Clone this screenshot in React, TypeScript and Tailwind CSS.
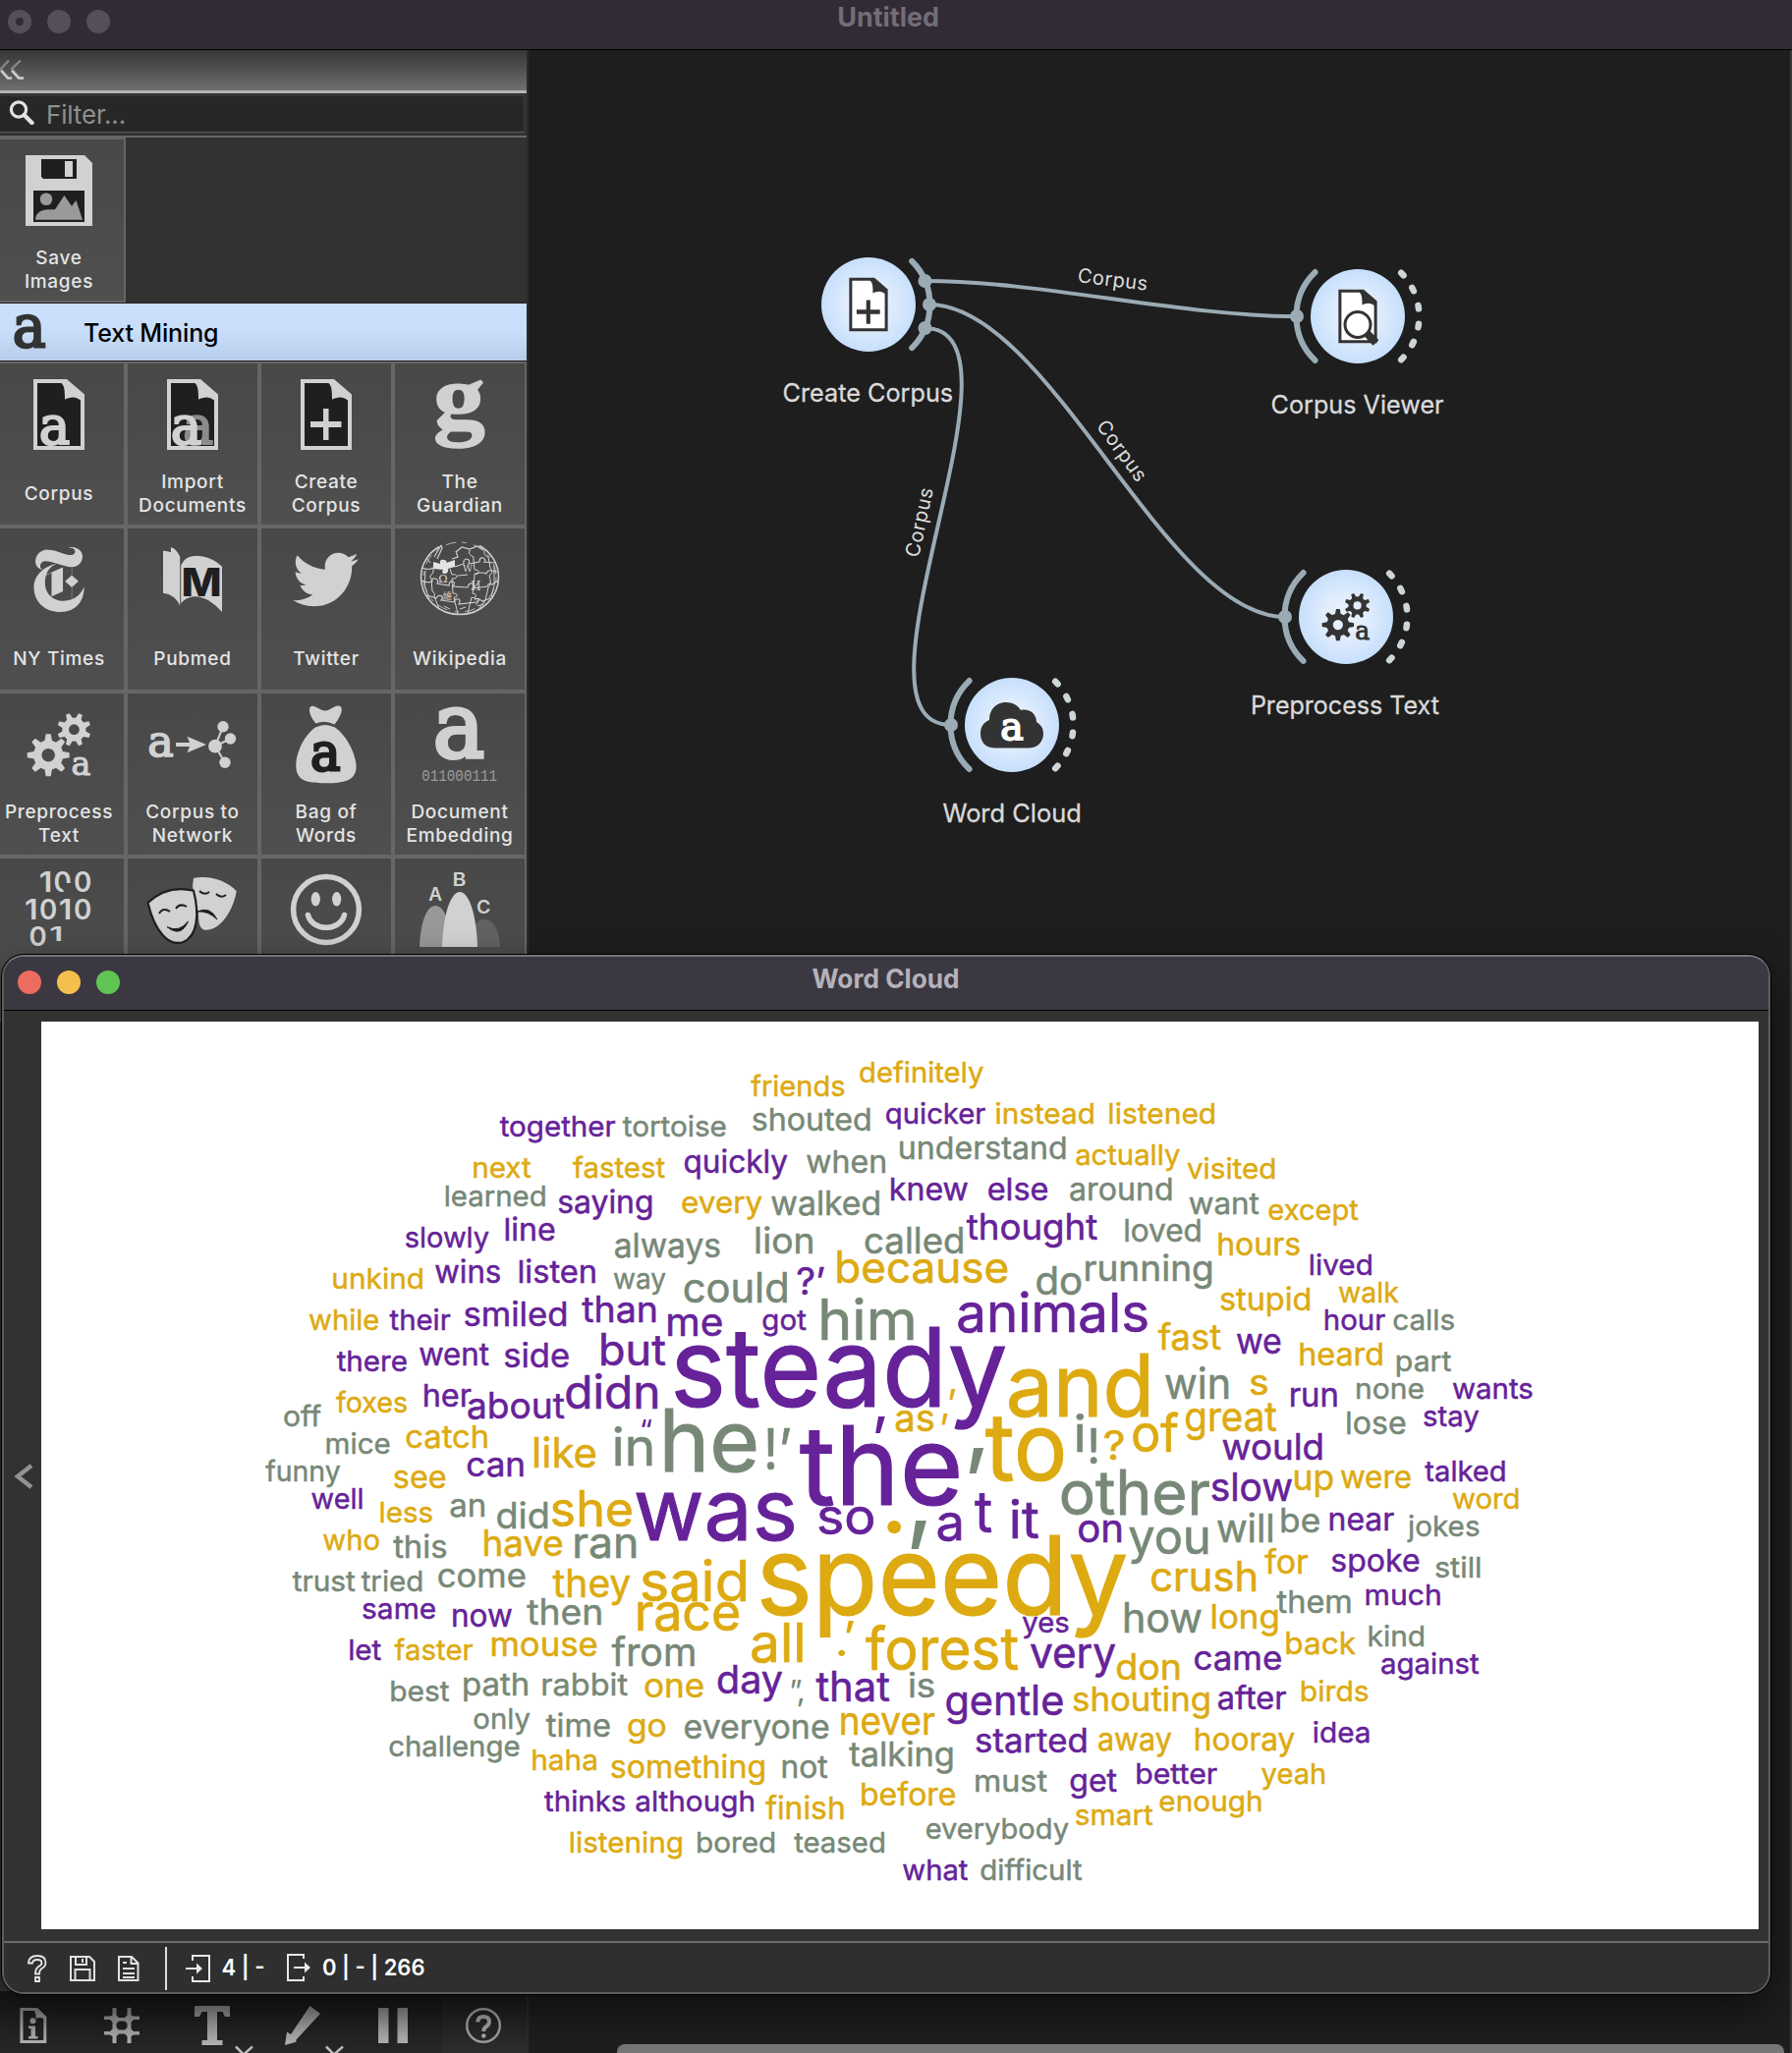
import React from "react";
import { FaTwitter } from "react-icons/fa";
import { SiNewyorktimes } from "react-icons/si";

/* ---------- fitted text ---------- */

const LIGHT = "#d1d1d1";
const DARK = "#1f1f1f";
const INK = "#333333";
const LINK = "#9aabb5";

let ctx: CanvasRenderingContext2D | null = null;
function ink(text: string, family: string, weight: number) {
  if (!ctx) ctx = document.createElement("canvas").getContext("2d");
  const c = ctx!;
  c.font = `${weight} 200px ${family}`;
  const m = c.measureText(text);
  return {
    left: m.actualBoundingBoxLeft / 200,
    width: (m.actualBoundingBoxLeft + m.actualBoundingBoxRight) / 200,
    up: m.actualBoundingBoxAscent / 200,
    down: m.actualBoundingBoxDescent / 200,
  };
}

type FitProps = {
  text: string;
  l: number;
  r: number;
  base?: number;
  size?: number;
  top?: number;
  bottom?: number;
  family?: string;
  weight?: number;
  fill?: string;
  stroke?: number;
};

/* SVG text whose ink spans l..r, set either on a baseline or inside a top/bottom box. */
function Fit({ text, l, r, base, size, top, bottom, family = "Inter, sans-serif", weight = 400, fill = LIGHT, stroke = 0 }: FitProps) {
  const m = ink(text, family, weight);
  let s = size ?? 16;
  let y = base ?? 0;
  if (top !== undefined && bottom !== undefined) {
    s = (bottom - top) / (m.up + m.down);
    y = bottom - m.down * s;
  }
  const k = (r - l) / (m.width * s);
  return (
    <text
      transform={`translate(${l} ${y}) scale(${k} 1)`}
      x={m.left * s}
      y={0}
      fontFamily={family}
      fontWeight={weight}
      fontSize={s}
      fill={fill}
      stroke={stroke ? fill : "none"}
      strokeWidth={stroke}
      className="whitespace-pre"
    >
      {text}
    </text>
  );
}

const SERIF = '"DejaVu Serif", serif';

function SlabA(p: { l: number; r: number; top: number; bottom: number; fill?: string; w?: number }) {
  const w = p.w ?? 2.2;
  return (
    <Fit text="a" l={p.l + w / 2} r={p.r - w / 2} top={p.top + w / 2} bottom={p.bottom - w / 2} family={SERIF} fill={p.fill} stroke={w} />
  );
}

/* ---------- shared drawings (136 x 110 tile space) ---------- */

function Doc({ frame = LIGHT, page = DARK }: { frame?: string; page?: string }) {
  return (
    <>
      <path d="M42 18H76L94 33.5V90H42Z" fill={frame} />
      <path d="M46 22H70.5C73.500 25 74 29 74 38.700C79 36 85 35 90 39.500V86H46Z" fill={page} />
    </>
  );
}

function Plus({ fill = LIGHT }: { fill?: string }) {
  return <path d="M65 48H70.500V61H83.500V67H70.500V80H65V67H52V61H65Z" fill={fill} />;
}

function gearPath(cx: number, cy: number, R: number, hole: number, phase: number) {
  const n = 8;
  const inner = R * 0.7;
  const step = (Math.PI * 2) / n;
  const p = (r: number, a: number) => `${(cx + r * Math.cos(a)).toFixed(2)} ${(cy + r * Math.sin(a)).toFixed(2)}`;
  let d = "";
  for (let i = 0; i < n; i++) {
    const a = i * step + phase;
    d += `${i ? "L" : "M"}${p(inner, a - step * 0.32)}L${p(R, a - step * 0.15)}L${p(R, a + step * 0.15)}L${p(inner, a + step * 0.32)}`;
    d += `A${inner} ${inner} 0 0 1 ${p(inner, a + step * 0.68)}`;
  }
  return `${d}ZM${cx + hole} ${cy}A${hole} ${hole} 0 1 0 ${cx - hole} ${cy}A${hole} ${hole} 0 1 0 ${cx + hole} ${cy}Z`;
}

function Gears({ fill = LIGHT }: { fill?: string }) {
  return (
    <>
      <path d={gearPath(57.2, 64.7, 21.6, 6.8, 0)} fill={fill} fillRule="evenodd" />
      <path d={gearPath(83.4, 38.7, 17.2, 5.4, Math.PI / 8)} fill={fill} fillRule="evenodd" />
      <SlabA l={81.300} r={100} top={66} bottom={86} fill={fill} w={1.2} />
    </>
  );
}

/* ---------- tile icons ---------- */

const icons: Record<string, React.ReactNode> = {
  save: (
    <>
      <path d="M34 18H94L102 26V90H34Z" fill={LIGHT} />
      <path d="M50 22H86V42H52L50 40Z" fill={DARK} />
      <path d="M74 24H82V40H74Z" fill={LIGHT} />
      <path d="M42 54H94V86H42Z" fill={DARK} />
      <circle cx="55" cy="62.700" r="6.300" fill="#9a9a9a" />
      <path d="M44 83.700C44 77 50 73.500 57 73.300H64L73.400 59L81 69.700L85.500 64L92 83.700Z" fill="#9a9a9a" />
    </>
  ),
  corpus: (
    <>
      <Doc />
      <SlabA l={49} r={79} top={54} bottom={86} />
    </>
  ),
  import: (
    <>
      <Doc />
      <SlabA l={59.5} r={89} top={54} bottom={86} fill="#8c8c8c" />
      <SlabA l={47} r={77} top={54} bottom={86} />
    </>
  ),
  create: (
    <>
      <Doc />
      <Plus />
    </>
  ),
  guardian: <Fit text="g" l={43.5} r={93} top={19.700} bottom={88} family={'"Liberation Serif", serif'} weight={700} stroke={1.6} />,
  nyt: (
    <g transform="translate(35 21)">
      <SiNewyorktimes size={66} color={LIGHT} />
    </g>
  ),
  pubmed: (
    <>
      <path d="M38 24.700Q42 24.500 45.900 26.300V21Q52 23 55.200 30.700V80.700Q50 69 38 67.700Z" fill={LIGHT} />
      <path d="M56.200 39.700C60 31 66 29.500 75 30C84 31 92 35 98 40.700V87C85 72 68 65 56.200 78Z" fill={LIGHT} />
      <Fit text="M" l={59} r={95.500} top={41.300} bottom={70.700} weight={800} fill={DARK} />
    </>
  ),
  twitter: (
    <g transform="translate(34 20.500)">
      <FaTwitter size={67} color={LIGHT} />
    </g>
  ),
  wikipedia: (
    <>
      <path d="M47 20.500C36 27 28.500 38 28.500 51.500A39.500 38 0 0 0 107.500 51.500C107.500 38 99.500 25.500 88 19.500" fill="none" stroke={LIGHT} strokeWidth="1.5" />
      <path d="M49 19L42 31M49 19L50 22L45 33M64 26L70 21L78 23L86 20L92 24M60 33L66 31L64 25" fill="none" stroke={LIGHT} strokeWidth="1.2" />
      <path d="M41 36L48 38Q47 33 52 34Q56 35 54 37L63 34V41L56 43Q57 48 52 48Q49 47 51 44L41 43Z" fill="#e4e4e4" />
      <path
        d="M30 42Q36 45 41 42M29 55Q35 58 40 56Q39 52 43 53Q47 54 45 58L57 60Q57 55 61 56Q64 58 61 61L76 62Q77 57 81 58Q84 60 81 63L96 61Q97 57 101 59L107 55M33 70Q40 71 44 73Q46 69 50 71Q51 74 49 75L62 77Q63 73 67 74Q69 76 67 79L85 77Q88 73 91 76L99 73M63 41L72 38Q71 34 75 33Q79 34 77 38L88 36Q88 31 92 32Q95 34 93 36L104 37M66 50L76 49M84 48Q90 46 95 48Q96 44 100 45L106 46"
        fill="none"
        stroke={LIGHT}
        strokeWidth="1.1"
      />
      <path
        d="M41 43Q42 48 39 49Q36 51 39 53L40 66Q44 68 42 71L47 84M58 43L60 49Q65 48 65 51Q64 54 60 53L61 68Q66 68 65 71Q63 73 62 72L66 89M78 24Q76 28 80 30Q83 30 82 34L83 44Q88 44 87 47Q86 50 83 48L82 62L81 68Q86 69 84 72Q82 73 80 72L76 89M93 24Q92 30 97 31L99 42Q103 47 98 50Q101 58 97 62L94 75L86 86M35 33L38 37M33 45L32 60L37 73M103 40V60L100 72M52 81L58 84M68 84L74 82M86 81L92 79"
        fill="none"
        stroke={LIGHT}
        strokeWidth="1"
      />
      <Fit text="Ω" l={47} r={55} top={49} bottom={57} family={SERIF} />
      <Fit text="W" l={71} r={81} top={39} bottom={46} family={SERIF} />
      <Fit text="И" l={80} r={89} top={56} bottom={65} family={SERIF} />
      <Fit text="維" l={51} r={60} top={67} bottom={75} family={'"Noto Sans CJK TC", sans-serif'} />
      <Fit text="7" l={83} r={88} top={73} bottom={80} family={SERIF} weight={700} />
      <ellipse cx="68" cy="51.500" rx="37" ry="35.500" fill="none" stroke={LIGHT} strokeWidth="0.8" strokeDasharray="3 5 7 4" pathLength={150} />
    </>
  ),
  preprocess: <Gears />,
  network: (
    <>
      <SlabA l={23.500} r={48.500} top={41} bottom={67} w={1.6} />
      <path d="M51 52H65L62.500 45.700L82 54L62.500 62.300L65 56H51Z" fill={LIGHT} />
      <path d="M91 55.700L99 35.700M91 55.700L106.500 48M91 55.700L101 72.300" stroke={LIGHT} strokeWidth="2" />
      <circle cx="91" cy="55.700" r="6.900" fill={LIGHT} />
      <circle cx="99" cy="35.700" r="5.700" fill={LIGHT} />
      <circle cx="106.500" cy="48" r="5.700" fill={LIGHT} />
      <circle cx="101" cy="72.300" r="5.700" fill={LIGHT} />
    </>
  ),
  bag: (
    <>
      <path d="M51.500 16C55 12 61 19.500 67 19.500C73 19.500 78 12 83 15.500C86 20 80 29 76.500 33.500Q67 28.500 57.500 32.500C52 26 50 20 51.500 16Z" fill={LIGHT} />
      <path d="M57 36.500Q67 31.500 77 36.500C90 46 98 64 98.600 76C98.600 90 88 93.300 68 93.300C46 93.300 37 90 37.300 74C37.500 62 46 44 57 36.500Z" fill={LIGHT} />
      <SlabA l={52.800} r={82.500} top={50} bottom={82} fill={DARK} w={2.8} />
    </>
  ),
  embedding: (
    <>
      <SlabA l={42.800} r={93} top={16.700} bottom={70.700} w={4} />
      <Fit text="011000111" l={30} r={105.500} top={80} bottom={91} family={'"Liberation Mono", monospace'} fill="#9c9c9c" />
    </>
  ),
  binary: (
    <>
      {(
        [
          ["1", 49.3, 59.3, 15.3, 36.3],
          ["0", 64, 79.6, 15.3, 36.3],
          ["0", 84.4, 100, 15.3, 36.3],
          ["1", 34.5, 44.5, 43, 64],
          ["0", 49.3, 64.8, 43, 64],
          ["1", 69.3, 79.3, 43, 64],
          ["0", 84.4, 100, 43, 64],
          ["0", 39, 54.5, 71, 91.5],
          ["1", 59.7, 70, 71, 86],
        ] as [string, number, number, number, number][]
      ).map(([t, l, r, top, bottom], i) => (
        <Fit key={i} text={t} l={l} r={r} top={top} bottom={bottom} weight={600} />
      ))}
      <path d="M73 27H81V32L74.500 38L71.500 33Z" fill="#494949" />
    </>
  ),
  masks: (
    <>
      <path d="M68 30L69 22C85.500 18.700 103 24.700 112.700 35.300C109.600 54.700 96 76.300 80.300 74.700C75 73 74 68 74 58Z" fill={LIGHT} />
      <path d="M75 35Q80 40 85 36M92 38Q97 43 102 39" fill="none" stroke={DARK} strokeWidth="2" />
      <path d="M73 56Q86 50 93 64Q84 55 73 56Z" fill={DARK} stroke={DARK} />
      <path d="M22.500 47C34 36.300 48 29.700 69 34.700C75 58 73.500 81 58 87.300C44 91 30 78 22.500 47Z" fill={LIGHT} stroke={DARK} strokeWidth="2.200" />
      <path d="M34 58Q38 51 45 56M51 53Q55 47 62 51" fill="none" stroke={DARK} strokeWidth="2" />
      <path d="M42 71.500Q54 78 63.500 66Q56 83 42 71.500Z" fill={DARK} stroke={DARK} />
    </>
  ),
  smile: (
    <>
      <ellipse cx="68" cy="54" rx="33.400" ry="33.400" fill="none" stroke={LIGHT} strokeWidth="5.500" />
      <ellipse cx="57.300" cy="43.300" rx="4.600" ry="7.300" fill={LIGHT} />
      <ellipse cx="78.700" cy="43.300" rx="4.600" ry="7.300" fill={LIGHT} />
      <path d="M49.500 59.500C54 76.500 82 76.500 86.500 59.500" fill="none" stroke={LIGHT} strokeWidth="5.500" strokeLinecap="round" />
    </>
  ),
  topics: (
    <>
      <path d="M27 92C28 65 35 50 43 50C52 50 58 65 59 92Z" fill="#989898" />
      <path d="M77 92C78 74 85 64 93 64C102 64 108 74 109 92Z" fill="#626262" />
      <path d="M50 92C51 58 59 36 68 36C77 36 85 58 86 92Z" fill={LIGHT} />
      <Fit text="A" l={36.700} r={49.700} top={31.700} bottom={45} weight={600} />
      <Fit text="B" l={62} r={73.500} top={16.700} bottom={30} weight={600} />
      <Fit text="C" l={86} r={98.600} top={44.700} bottom={58.300} weight={600} />
    </>
  ),
};

function Tile({ icon, label }: { icon: string; label: string[] }) {
  return (
    <div className="flex h-[168px] w-[136px] shrink-0 flex-col border-2 border-[#666666] bg-linear-to-b from-[#484848] to-[#4f4f4f]">
      <svg viewBox="2 2 132 106" className="h-[106px] w-[132px] shrink-0">
        {icons[icon]}
      </svg>
      <div className="flex h-[54px] flex-col items-center justify-center text-[19px] leading-[24px] font-medium tracking-[0.7px] whitespace-nowrap text-[#e4e4e4]">
        {label.map((t) => (
          <span key={t}>{t}</span>
        ))}
      </div>
    </div>
  );
}

const tiles: { icon: string; label: string[] }[] = [
  { icon: "corpus", label: ["Corpus"] },
  { icon: "import", label: ["Import", "Documents"] },
  { icon: "create", label: ["Create", "Corpus"] },
  { icon: "guardian", label: ["The", "Guardian"] },
  { icon: "nyt", label: ["NY Times"] },
  { icon: "pubmed", label: ["Pubmed"] },
  { icon: "twitter", label: ["Twitter"] },
  { icon: "wikipedia", label: ["Wikipedia"] },
  { icon: "preprocess", label: ["Preprocess", "Text"] },
  { icon: "network", label: ["Corpus to", "Network"] },
  { icon: "bag", label: ["Bag of", "Words"] },
  { icon: "embedding", label: ["Document", "Embedding"] },
  { icon: "binary", label: [] },
  { icon: "masks", label: [] },
  { icon: "smile", label: [] },
  { icon: "topics", label: [] },
];

/* ---------- sidebar ---------- */

function Sidebar() {
  return (
    <aside className="flex w-[538px] shrink-0 flex-col border-r-2 border-[#2b2b2b] bg-[#323232]">
      <div className="h-[44px] shrink-0 border-b-[3px] border-[#b4b4b4] bg-linear-to-b from-[#363636] to-[#707070]">
        <svg width="26" height="40" viewBox="0 0 26 40" fill="none" strokeWidth="2.400">
          <path d="M9 10.500L1 19L8 28M21 10.500L12 19L20 28" stroke="#858585" />
          <path d="M1 21L8 28.500H12M12 21L19 28.500H24" stroke="#cfcfcf" />
        </svg>
      </div>
      <div className="mt-[2px] flex h-[38px] w-[534px] shrink-0 items-center border-t border-r border-b border-[#3b3b3b] border-b-[#5c5c5c] bg-[#272727] pl-[9px]">
        <svg width="26" height="26" viewBox="0 0 26 26" className="-mt-1 shrink-0" fill="none" stroke="#e2e2e2">
          <circle cx="10" cy="10.500" r="7.600" strokeWidth="3.200" />
          <path d="M15.500 16L23.500 24" strokeWidth="4.400" strokeLinecap="round" />
        </svg>
        <span className="mt-[2px] ml-[12px] text-[26px] leading-none tracking-[-0.15px] text-[#8f8f8f]">Filter...</span>
      </div>
      <div className="mt-[3px] shrink-0 border-t-2 border-[#666666]">
        <div className="-ml-2">
          <Tile icon="save" label={["Save", "Images"]} />
        </div>
      </div>
      <div className="flex h-[60px] shrink-0 items-center border-y border-[#202020] bg-linear-to-b from-[#cae0fd] via-[#c8defa] to-[#b6cce8]">
        <svg width="60" height="58" viewBox="0 309 60 58" className="shrink-0">
          <SlabA l={14} r={46.500} top={320} bottom={355.500} fill="#333333" w={2.6} />
        </svg>
        <span className="mt-[3px] ml-[25px] text-[25px] font-medium tracking-[-0.15px] text-black">Text Mining</span>
      </div>
      <div className="min-h-0 flex-1 overflow-hidden">
        <div className="-ml-2 grid w-[544px] grid-cols-4">
          {tiles.map((t) => (
            <Tile key={t.icon} {...t} />
          ))}
        </div>
      </div>
      <Toolbar />
    </aside>
  );
}

function Toolbar() {
  return (
    <div className="flex h-[64px] shrink-0 border-t border-[#3c3c3c] bg-linear-to-b from-[#171717] to-[#282828]">
      <svg width="536" height="63" viewBox="0 2027 536 63">
        <defs>
          <linearGradient id="tool" gradientUnits="userSpaceOnUse" x1="0" y1="2042" x2="0" y2="2082">
            <stop offset="0" stopColor="#858585" />
            <stop offset="1" stopColor="#b4b4b4" />
          </linearGradient>
        </defs>
        <path d="M450 2027H536V2090H450Z" fill="#ffffff" fillOpacity="0.025" />
        <g fill="url(#tool)">
          <path fillRule="evenodd" d="M20.400 2044H38L47.300 2053V2080H20.400ZM23.500 2047V2077H44.300V2055Q40 2053 36.500 2055Q37 2050 35 2047Z" />
          <circle cx="33.500" cy="2057.300" r="3" />
          <path d="M29 2062.500H36V2073H38.500V2075.500H29V2073H31.500V2065H29Z" />
          <path d="M114.500 2044H118.500V2051.500L121 2054H127L129.500 2051.500V2044H133.500V2051.500L136 2052.500H142V2056H136L133.500 2058.500V2065.500L136 2068H142V2071.500H136L133.500 2073V2080H129.500V2073L127 2070.500H121L118.500 2073V2080H114.500V2073L112 2071.500H106V2068H112L114.500 2065.500V2058.500L112 2056H106V2052.500H112L114.500 2051.500ZM121 2057.500L118.500 2060V2064L121 2066.500H127L129.500 2064V2060L127 2057.500Z" fillRule="evenodd" />
          <path d="M198 2042H234V2053H229L226.500 2048H221V2077H226.500V2082H205.500V2077H211V2048H205.500L203 2053H198Z" />
          <path d="M315.500 2042L326 2050L301 2077L302 2078.500L290 2082L292 2068.500L296 2071Z" />
          <path d="M385 2044H395.500V2080H385ZM404.500 2044H415V2080H404.500Z" />
        </g>
        <g fill="none" stroke="#bdbdbd" strokeWidth="2.500">
          <path d="M240 2083.500L248 2091.500L257 2083.500M332 2083.500L340 2091.500L349 2083.500" />
          <circle cx="492" cy="2062" r="16.800" stroke="#9e9e9e" />
          <path d="M486.300 2058.500Q486.500 2053 492 2053Q498 2053 498 2058Q498 2061 495 2063Q492.300 2064.500 492.300 2068" stroke="#a2a2a2" strokeWidth="4" />
        </g>
        <circle cx="492.300" cy="2072.500" r="2.300" fill="#aaaaaa" />
      </svg>
    </div>
  );
}

/* ---------- workflow canvas ---------- */

function polar(r: number, deg: number) {
  const a = (deg * Math.PI) / 180;
  return `${(r * Math.cos(a)).toFixed(2)} ${(r * Math.sin(a)).toFixed(2)}`;
}
const ARC_R = 62.5;
const rightArc = `M${polar(ARC_R, -45)}A${ARC_R} ${ARC_R} 0 0 1 ${polar(ARC_R, 45)}`;
const leftArc = `M${polar(ARC_R, 226)}A${ARC_R} ${ARC_R} 0 0 0 ${polar(ARC_R, 134)}`;

function Node({ x, y, children, source }: { x: number; y: number; children: React.ReactNode; source?: boolean }) {
  return (
    <g transform={`translate(${x} ${y})`}>
      {source ? (
        <g fill={LINK}>
          <path d={rightArc} fill="none" stroke={LINK} strokeWidth="6" strokeLinecap="round" />
          <circle cx="57.500" cy="-24" r="7" />
          <circle cx="62" cy="0" r="7" />
          <circle cx="57.500" cy="24" r="7" />
        </g>
      ) : (
        <g>
          <path d={leftArc} fill="none" stroke={LINK} strokeWidth="6" strokeLinecap="round" />
          <circle cx="-62" cy="0" r="7" fill={LINK} />
          <path d={rightArc} fill="none" stroke="#cdd5d8" strokeWidth="6.500" strokeLinecap="round" strokeDasharray="3.600 15.300" />
        </g>
      )}
      <circle r="48" fill="url(#node)" />
      {children}
    </g>
  );
}

const tileSpace = "scale(0.755) translate(-68 -54)";

function Canvas() {
  return (
    <svg width="1284" height="2039" viewBox="538 51 1284 2039" className="shrink-0 bg-[#1e1e1e]">
      <defs>
        <radialGradient id="node">
          <stop offset="0" stopColor="#ecf4fe" />
          <stop offset="0.500" stopColor="#dfecfd" />
          <stop offset="1" stopColor="#c7dffc" />
        </radialGradient>
      </defs>
      <g fill="none" stroke={LINK} strokeWidth="4">
        <path d="M941 286C1060 286 1201 322 1320 322" />
        <path d="M946 310C1068 310 1186 628 1308 628" />
        <path d="M941 334C1060 334 849 738 968 738" />
      </g>
      <Node x={884} y={310} source>
        <g transform={tileSpace}>
          <Doc frame={INK} page="#ffffff" />
          <Plus fill={INK} />
        </g>
      </Node>
      <Node x={1382} y={322}>
        <g transform={tileSpace}>
          <Doc frame={INK} page="#ffffff" />
        </g>
        <path d="M9 17L18.500 27" stroke={INK} strokeWidth="8" />
        <circle cx="0" cy="8.400" r="13" fill="#ffffff" stroke={INK} strokeWidth="3" />
      </Node>
      <Node x={1370} y={628}>
        <g transform={tileSpace}>
          <Gears fill={INK} />
        </g>
      </Node>
      <Node x={1030} y={738}>
        <path d="M-18 23.400C-27 23.400 -32 17 -32 9C-32 1 -28 -3 -23 -5C-23 -17 -15 -23 -6 -23C1 -23 6 -20 9 -15C18 -17 25 -11 25 -3C30 0 32 4 32 9C32 17 26 23.400 18 23.400Z" fill={INK} />
        <SlabA l={-11} r={11.500} top={-7.500} bottom={16} fill="#ffffff" w={1.8} />
      </Node>
      <Fit text="Create Corpus" l={798} r={969} base={408.700} size={25.500} fill="#dadada" stroke={0.3} />
      <Fit text="Corpus Viewer" l={1295} r={1469} base={420.700} size={25.500} fill="#dadada" stroke={0.3} />
      <Fit text="Preprocess Text" l={1275} r={1464.500} base={726.700} size={25.500} fill="#dadada" stroke={0.3} />
      <Fit text="Word Cloud" l={960} r={1099} base={836.900} size={25.500} fill="#dadada" stroke={0.3} />
      <g fill="#dedede" fontFamily="Inter, sans-serif" fontSize="20" fontWeight="400" letterSpacing="0.500" textAnchor="middle">
        <text transform="translate(1132 291.500) rotate(7)">Corpus</text>
        <text transform="translate(1136.500 463) rotate(54)">Corpus</text>
        <text transform="translate(942.500 533) rotate(-78)">Corpus</text>
      </g>
    </svg>
  );
}

/* ---------- word cloud ---------- */

const P = "#662299";
const Y = "#ddaa11";
const G = "#778877";

/* Each sector of the cloud stores its words on its own grid: [text, left, right, baseline, size, colour]. */
type Word = [string, number, number, number, number, string];
type Sector = { ox: number; oy: number; ux: number; uy: number; words: Word[] };

const UX = 780 / 1568;

const sectors: Sector[] = [
  {
    ox: 260, oy: 1060, ux: 1 / 2.8, uy: 1 / 3,
    words: [
      ["together", 696, 1024, 292, 29, P], ["tortoise", 1046, 1339, 292, 29, G], ["next", 622, 784, 418, 29, Y],
      ["fastest", 904, 1166, 418, 29, Y], ["quickly", 1223, 1515, 401, 32, P], ["learned", 542, 824, 503, 29, G],
      ["saying", 864, 1128, 526, 31.5, P], ["every", 1216, 1443, 526, 31.5, Y], ["slowly", 428, 664, 629, 29, P],
      ["line", 713, 851, 610, 31.5, P], ["always", 1024, 1322, 659, 34, G], ["unkind", 222, 475, 755, 29, Y],
      ["wins", 512, 696, 737, 31.5, P], ["listen", 752, 967, 737, 31.5, P], ["way", 1021, 1168, 755, 29, G],
      ["could", 1222, 1513, 797, 42, G], ["while", 153, 349, 881, 29, Y], ["their", 382, 554, 881, 29, P],
      ["smiled", 596, 884, 869, 34, P], ["than", 930, 1139, 857, 37, P], ["me", 1176, 1328, 899, 39.5, P],
      ["there", 231, 429, 1007, 29, P], ["went", 467, 664, 989, 31.5, P], ["side", 710, 891, 995, 34, P],
      ["but", 986, 1167, 989, 44.5, P], ["didn", 886, 1144, 1121, 47, P], ["foxes", 229, 430, 1133, 29, Y],
      ["her", 481, 613, 1115, 31.5, P], ["about", 605, 879, 1151, 37, P], ["off", 82, 186, 1175, 29, G],
      ["mice", 203, 381, 1259, 29, G], ["catch", 430, 659, 1241, 31.5, Y], ["like", 795, 968, 1301, 42, Y],
      ["in", 1024, 1128, 1295, 52, G], ["he", 1167, 1424, 1313, 87.5, G], ["!’", 1458, 1522, 1307, 58, G],
      ["funny", 28, 240, 1343, 29, G], ["see", 395, 540, 1366, 31.5, Y], ["can", 604, 762, 1330, 34, P],
    ],
  },
  {
    ox: 800, oy: 1060, ux: UX, uy: 1 / 3,
    words: [
      ["definitely", 151, 403, 125, 29, Y], ["quicker", 205, 407, 251, 29, P], ["instead", 430, 628, 251, 29, Y],
      ["listened", 662, 876, 251, 29, Y], ["understand", 233, 571, 359, 31.5, G], ["when", 42, 202, 401, 31.5, G],
      ["actually", 593, 805, 377, 29, Y], ["visited", 821, 999, 419, 29, Y], ["knew", 215, 371, 485, 31.5, P],
      ["else", 414, 534, 485, 31.5, P], ["around", 581, 788, 485, 31.5, G], ["want", 825, 967, 527, 30, G],
      ["except", 988, 1170, 545, 29, Y], ["thought", 369, 636, 605, 37, P], ["loved", 694, 847, 611, 31.5, G],
      ["called", 162, 361, 647, 37, G], ["hours", 885, 1050, 653, 31.5, Y], ["because", 105, 452, 737, 44.5, Y],
      ["do", 513, 603, 773, 39.5, G], ["running", 613, 870, 731, 37, G], ["lived", 1073, 1197, 713, 29, P],
      ["?’", 23, 77, 773, 38, P], ["him", 73, 259, 911, 57.5, G], ["animals", 352, 738, 887, 55, P],
      ["stupid", 889, 1071, 821, 31.5, Y], ["walk", 1131, 1253, 797, 29, Y], ["hour", 1103, 1225, 881, 29, P],
      ["calls", 1243, 1366, 881, 29, G], ["fast", 761, 889, 941, 37, Y], ["we", 922, 1011, 953, 36, P],
      ["heard", 1052, 1219, 989, 31.5, Y], ["part", 1250, 1360, 1007, 29, G], ["and", 456, 741, 1146, 87.5, Y],
      ["win", 776, 904, 1091, 43, G], ["s", 950, 984, 1079, 36, Y], ["run", 1033, 1126, 1115, 34, P],
      ["none", 1168, 1303, 1091, 29, G], ["wants", 1364, 1526, 1091, 29, P], ["as", 224, 301, 1192, 38, Y],
      ["great", 818, 1003, 1192, 42, Y], ["of", 710, 802, 1253, 53, Y], ["would", 893, 1096, 1277, 37, P],
      ["lose", 1148, 1266, 1199, 31.5, G], ["stay", 1305, 1417, 1175, 29, P], ["i", 594, 608, 1253, 52, G],
      ["!", 622, 635, 1289, 49, G], ["?", 652, 690, 1277, 41, Y], ["to", 408, 566, 1340, 95, Y],
      ["were", 1135, 1277, 1366, 31.5, Y], ["talked", 1307, 1470, 1343, 29, P],
    ],
  },
  {
    ox: 260, oy: 1500, ux: 1 / 2.8, uy: 1 / 3,
    words: [
      ["well", 160, 302, 107, 29, P], ["less", 357, 502, 149, 29, Y], ["an", 555, 651, 131, 31.5, G],
      ["did", 689, 831, 167, 37, G], ["she", 845, 1071, 161, 50, Y], ["was", 1084, 1533, 203, 87.5, P],
      ["who", 193, 351, 234, 29, Y], ["this", 392, 542, 258, 31.5, G], ["have", 652, 873, 251, 37, Y],
      ["ran", 911, 1083, 257, 44.5, G], ["trust", 105, 283, 359, 29, G], ["tried", 301, 473, 359, 29, G],
      ["come", 521, 767, 347, 34, G], ["they", 847, 1067, 378, 39.5, Y], ["said", 1101, 1396, 390, 57.5, Y],
      ["race", 1090, 1376, 480, 53, Y], ["same", 306, 511, 443, 29, P], ["now", 563, 729, 467, 31.5, P],
      ["then", 773, 983, 461, 37, G], ["let", 269, 357, 569, 29, P], ["faster", 396, 618, 569, 29, Y],
      ["mouse", 674, 971, 557, 34, Y], ["from", 1015, 1249, 587, 40, G], ["best", 387, 551, 695, 29, G],
      ["path", 594, 774, 677, 31.5, G], ["rabbit", 819, 1059, 677, 31.5, G], ["one", 1110, 1275, 683, 34, Y],
      ["day", 1318, 1500, 671, 39.5, P], ["only", 623, 781, 779, 29, G], ["time", 828, 1008, 803, 31.5, G],
      ["go", 1062, 1167, 803, 31.5, Y], ["challenge", 382, 750, 863, 29, G], ["haha", 790, 970, 905, 29, Y],
      ["something", 1014, 1449, 929, 31.5, Y], ["thinks", 823, 1052, 1031, 29, P], ["although", 1084, 1418, 1031, 29, P],
      ["listening", 898, 1214, 1157, 29, Y], ["bored", 1260, 1478, 1157, 29, G],
    ],
  },
  {
    ox: 800, oy: 1500, ux: UX, uy: 1 / 3,
    words: [
      ["other", 564, 865, 125, 63, G], ["slow", 871, 1034, 83, 39.5, P], ["up", 1041, 1118, 51, 36, Y],
      ["word", 1364, 1498, 107, 29, Y], ["so", 67, 178, 186, 52, P], ["a", 310, 357, 203, 52, P],
      ["t", 386, 420, 179, 59, P], ["it", 462, 516, 197, 53, P], ["on", 599, 685, 209, 40, P],
      ["you", 702, 862, 245, 50, G], ["will", 882, 994, 209, 39.5, G], ["be", 1014, 1090, 179, 34, G],
      ["near", 1113, 1243, 173, 31.5, P], ["jokes", 1271, 1417, 191, 29, G], ["crush", 748, 960, 359, 42, Y],
      ["for", 979, 1067, 305, 34, Y], ["spoke", 1117, 1294, 299, 31.5, P], ["still", 1329, 1419, 317, 29, G],
      ["how", 693, 849, 485, 42, G], ["long", 872, 1005, 473, 34, Y], ["them", 1004, 1154, 425, 31.5, G],
      ["much", 1187, 1337, 401, 29, P], ["yes", 484, 577, 485, 29, P], ["forest", 163, 474, 600, 61, Y],
      ["very", 500, 673, 593, 44.5, P], ["don", 677, 804, 629, 37, Y], ["came", 836, 1012, 599, 34.5, P],
      ["back", 1024, 1165, 551, 31.5, Y], ["kind", 1193, 1304, 527, 29, G], ["against", 1218, 1417, 611, 29, P],
      ["that", 61, 211, 695, 42, P], ["is", 253, 302, 683, 34, G], ["gentle", 328, 565, 737, 42, P],
      ["shouting", 588, 865, 725, 34, Y], ["after", 884, 1022, 719, 31.5, P], ["birds", 1055, 1190, 695, 29, Y],
      ["never", 113, 303, 797, 39.5, Y], ["talking", 129, 340, 893, 34, G], ["started", 389, 613, 851, 34, P],
      ["away", 639, 788, 845, 31.5, Y], ["hooray", 838, 1040, 845, 31.5, Y], ["idea", 1080, 1192, 821, 29, P],
      ["must", 388, 533, 971, 31.5, G], ["get", 582, 676, 971, 33, P], ["better", 718, 881, 947, 29, P],
      ["yeah", 973, 1101, 947, 29, Y], ["before", 155, 345, 1013, 31.5, Y], ["smart", 593, 750, 1073, 29, Y],
      ["enough", 765, 971, 1031, 29, Y], ["everybody", 287, 577, 1115, 29, G], ["what", 239, 371, 1241, 29, P],
      ["difficult", 399, 605, 1241, 29, G],
    ],
  },
  {
    ox: 0, oy: 0, ux: 1, uy: 1,
    words: [
      ["friends", 764, 859, 1115.7, 29, Y], ["shouted", 766, 885, 1151.3, 31.5, G], ["walked", 785, 894.5, 1237.3, 34, G],
      ["lion", 769.600, 826.400, 1275.700, 37, G], ["got", 776.500, 820, 1353.700, 29, P], ["steady", 687, 1022.900, 1431.700, 112, P],
      ["the", 814, 975, 1531.700, 112, P], ["speedy", 774.600, 1145.700, 1644, 112, Y], ["all", 765, 816, 1691.700, 55, Y],
      ["everyone", 697, 842.800, 1769.700, 34, G], ["not", 796.500, 841.800, 1809.700, 31.5, G],
      ["finish", 779, 858, 1851.700, 31.5, Y], ["teased", 808, 899.500, 1885.700, 29, G],
    ],
  },
];

/* Punctuation tokens, boxed: [text, left, right, top, bottom, colour]. */
const marks: [string, number, number, number, number, string][] = [
  ["“", 653, 663, 1445, 1452.700, P],
  ["’", 891, 901, 1441.700, 1459, P],
  ["’", 966.600, 972.600, 1414, 1425, Y],
  ["’", 958.700, 964.700, 1439, 1450.700, Y],
  ["’", 986.500, 1001.500, 1474.300, 1500.700, G],
  ["’", 927.300, 943.300, 1547.300, 1576.700, G],
  [".", 903, 917, 1547.300, 1560.700, Y],
  ["’", 861.200, 869.200, 1650, 1662.300, Y],
  [".", 853.200, 860.200, 1680, 1686.500, Y],
  ["”", 805.500, 815.500, 1710.700, 1719.300, G],
  ["’", 812.400, 817.400, 1729, 1737.300, G],
];

function Cloud() {
  return (
    <svg width="1748" height="924" viewBox="42 1040 1748 924" className="shrink-0 bg-white">
      {sectors.map((s, i) => (
        <g key={i}>
          {s.words.map(([t, l, r, b, size, c]) => (
            <Fit key={t} text={t} l={s.ox + l * s.ux + 0.3} r={s.ox + r * s.ux + 0.3} base={s.oy + b * s.uy} size={size} fill={c} stroke={0.25 + size * 0.008} />
          ))}
        </g>
      ))}
      {marks.map(([t, l, r, top, bottom, c], i) => (
        <Fit key={i} text={t} l={l} r={r} top={top} bottom={bottom} fill={c} />
      ))}
    </svg>
  );
}

function StatusBar() {
  return (
    <div className="flex flex-1 items-center border-t-2 border-[#6a6a6a] bg-[#2f2f2f] pt-[1px] pl-[22px]">
      <svg width="24" height="30" viewBox="0 0 24 30" fill="none" stroke="#e6e6e6" strokeWidth="1.800">
        <path d="M3 9.500Q3.500 2 12 2Q20.500 2 20.500 9Q20.500 13 16.500 15Q14 16.500 14 20.500H10Q10 15 13.500 12.800Q16.500 11.500 16.500 9Q16.500 6 12 6Q7.500 6 7 9.500Z" />
        <path d="M10 24H14V28H10Z" />
      </svg>
      <svg width="28" height="28" viewBox="0 0 28 28" className="ml-[20px]" fill="none" stroke="#e0e0e0" strokeWidth="2">
        <path d="M2 2H21L26 7V26H2ZM7 2V10H18V2M14 4V8M6.500 26V15H21.500V26" />
      </svg>
      <svg width="24" height="28" viewBox="0 0 24 28" className="ml-[21px]" fill="none" stroke="#e0e0e0" strokeWidth="2">
        <path d="M2 2H15L21.500 8.500V26H2ZM14.500 2V9H21.500M6 8H10M6 14H18M6 19H18M6 23H18" />
      </svg>
      <div className="ml-[25px] h-[44px] w-[1.500px] bg-[#dddddd]" />
      <svg width="28" height="30" viewBox="0 0 28 30" className="ml-[18px]" fill="none" stroke="#e8e8e8" strokeWidth="2">
        <path d="M8 7V2H25V28H8V23M1 15H14" />
        <path d="M12 9.500L18 15L12 20.500Z" fill="#e8e8e8" stroke="none" />
      </svg>
      <svg width="230" height="30" viewBox="216 1990 230 30">
        <g stroke="#e8e8e8" strokeWidth="2" fill="none">
          <path d="M309 1995V1991H293V2017H309V2013M299 2004H312" />
          <path d="M310 1998.500L316 2004L310 2009.500Z" fill="#e8e8e8" stroke="none" />
        </g>
        <Fit text="4 | -" l={226.500} r={268} base={2011.800} size={22.500} weight={600} fill="#ffffff" />
        <Fit text="0 | - | 266" l={329} r={431.500} base={2011.800} size={22.500} weight={600} fill="#ffffff" />
      </svg>
    </div>
  );
}

function WordCloudWindow() {
  return (
    <section className="absolute top-[972px] left-[2px] flex h-[1058px] w-[1800px] flex-col overflow-hidden rounded-[22px] border-2 border-[#5e5e60] border-t-[#77747c] bg-[#323232] shadow-[0_0_0_1px_#000,0_16px_40px_rgba(0,0,0,0.55)]">
      <header className="flex h-[55px] shrink-0 items-center border-b border-black bg-[#3c3842] pb-[2px] pl-[14px]">
        <i className="h-[24px] w-[24px] rounded-full bg-[#ed6b5f]" />
        <i className="ml-[16px] h-[24px] w-[24px] rounded-full bg-[#f5bf4f]" />
        <i className="ml-[16px] h-[24px] w-[24px] rounded-full bg-[#61c554]" />
        <svg width="200" height="52" viewBox="800 974 200 52" className="ml-[678px]">
          <Fit text="Word Cloud" l={827} r={975} base={1005.700} size={26.500} weight={700} fill="#b5b2b9" />
        </svg>
      </header>
      <div className="flex h-[947px] shrink-0 pt-[11px]">
        <div className="flex w-[38px] shrink-0 items-center pb-[11px]">
          <svg width="24" height="30" viewBox="0 0 24 30" className="ml-[8px]" fill="none" stroke="#929292" strokeWidth="4.500">
            <path d="M20 4L6 15L20 26" />
          </svg>
        </div>
        <Cloud />
      </div>
      <StatusBar />
    </section>
  );
}

export default function App() {
  return (
    <div className="relative flex h-[2090px] w-[1824px] flex-col overflow-hidden bg-[#1e1e1e] font-['Inter',sans-serif]">
      <header className="flex h-[51px] shrink-0 items-center border-b border-black bg-[#322b37] pb-[6px] pl-[8px]">
        <i className="flex h-[24px] w-[24px] items-center justify-center rounded-full bg-[#564f5b]">
          <b className="h-[8px] w-[8px] rounded-full bg-[#322b37]" />
        </i>
        <i className="ml-[16px] h-[24px] w-[24px] rounded-full bg-[#564f5b]" />
        <i className="ml-[16px] h-[24px] w-[24px] rounded-full bg-[#564f5b]" />
        <svg width="140" height="44" viewBox="840 0 140 44" className="ml-[728px]">
          <Fit text="Untitled" l={854} r={954.500} base={27.300} size={26.500} weight={700} fill="#736d78" />
        </svg>
      </header>
      <main className="flex min-h-0 flex-1">
        <Sidebar />
        <Canvas />
        <div className="w-[2px] bg-[#383838]" />
      </main>
      <div className="absolute top-[2081px] left-[628px] h-[20px] w-[1188px] rounded-[8px] bg-[#777777]" />
      <WordCloudWindow />
    </div>
  );
}
